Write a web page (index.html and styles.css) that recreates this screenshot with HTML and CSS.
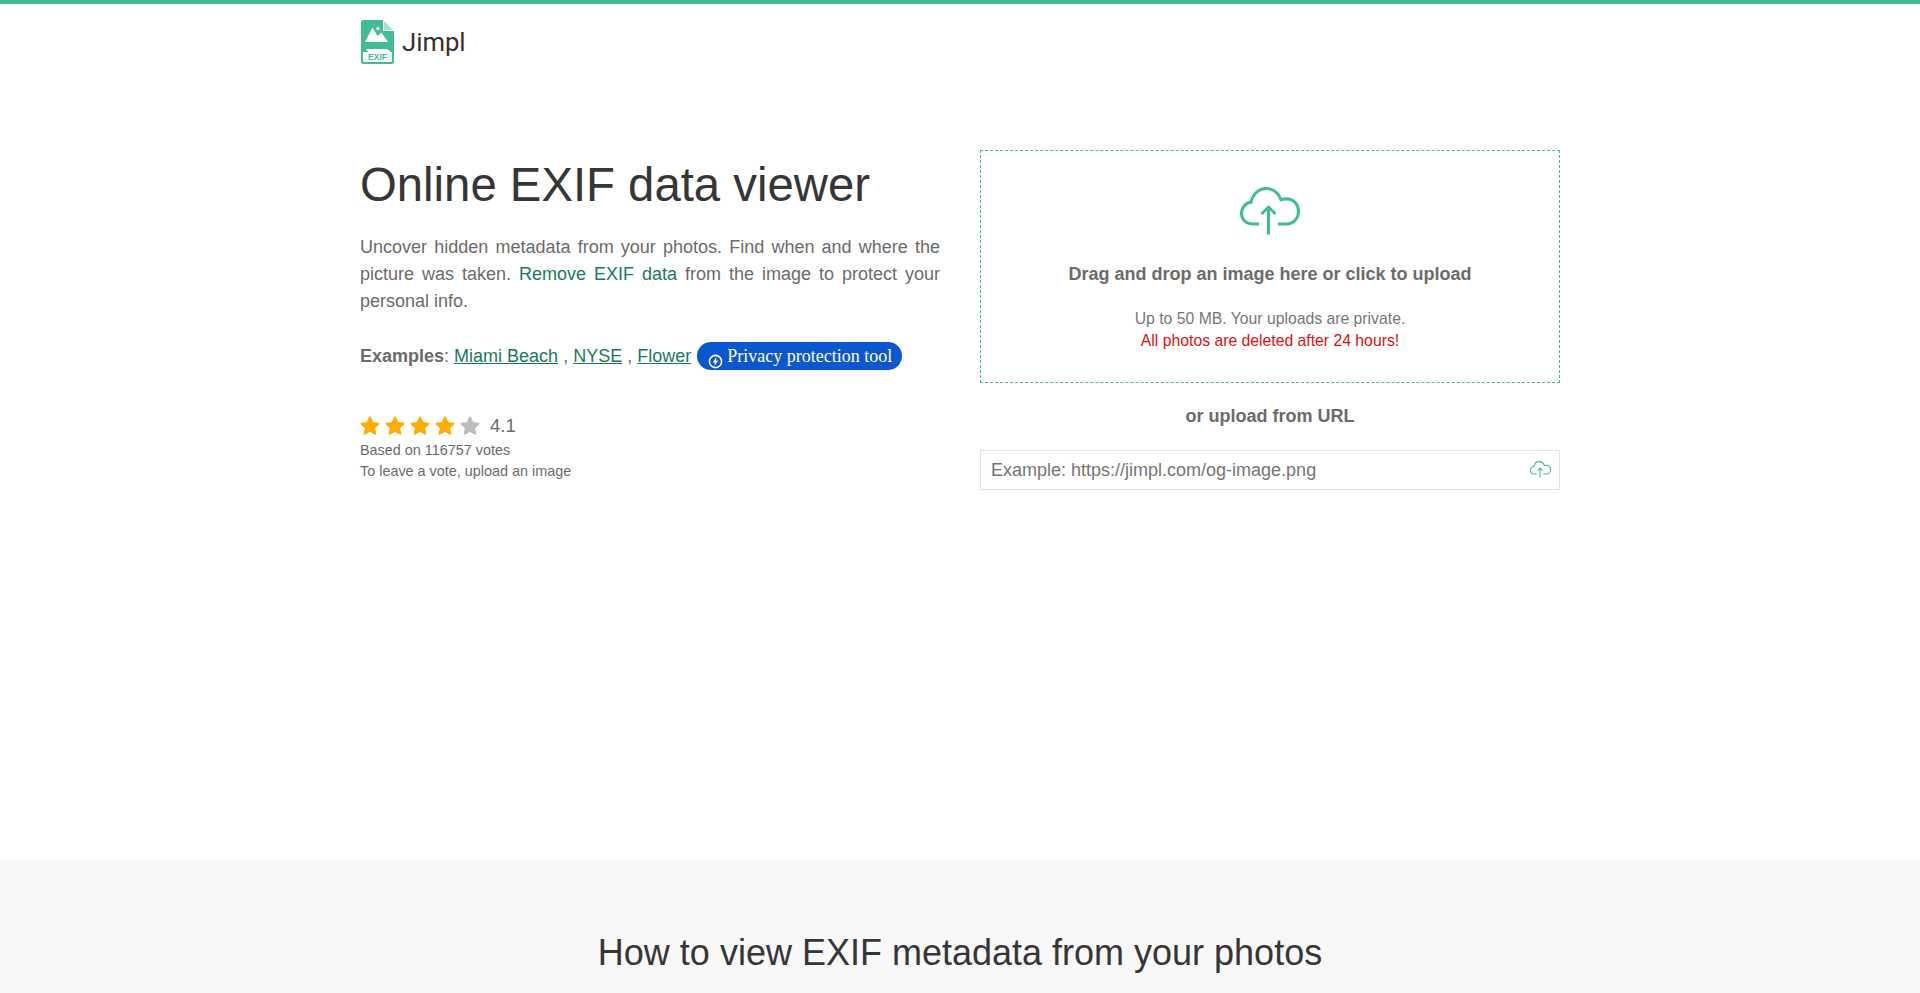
FILE: index.html
```html
<!DOCTYPE html>
<html lang="en">
<head>
<meta charset="utf-8">
<title>Jimpl - Online EXIF data viewer</title>
<link rel="stylesheet" href="styles.css">
</head>
<body>
<header class="topbar">
  <a class="brand" href="#">
    <svg class="brand-icon" viewBox="0 0 33 44" width="33" height="44">
      <path fill="#41bd94" d="M2.500 0H22L33 11V41.500a2.500 2.500 0 0 1-2.500 2.500H2.500A2.500 2.500 0 0 1 0 41.500V2.500A2.500 2.500 0 0 1 2.500 0z"/>
      <path fill="#a9e2cd" stroke="#fff" stroke-width="1" d="M22.500 0V10.500H33z"/>
      <path fill="#fff" d="M2 32H7.500L5 29H26L30 32H31V41a1 1 0 0 1-1 1H3a1 1 0 0 1-1-1z"/>
      <path fill="#fff" d="M4 22L11.500 7.500 16.500 16 20.500 12.500 27 22z"/>
      <circle fill="#fff" cx="17" cy="8.500" r="1.700"/>
      <text class="brand-exif" x="16.500" y="40" text-anchor="middle">EXIF</text>
    </svg>
    <span class="brand-name">Jimpl</span>
  </a>
</header>
<main class="hero">
  <section class="intro">
    <h1 class="title">Online EXIF data viewer</h1>
    <p class="lead">Uncover hidden metadata from your photos. Find when and where the picture was taken. <a class="plain-link" href="#">Remove EXIF data</a> from the image to protect your personal info.</p>
    <p class="examples"><strong>Examples</strong>: <a class="ex-link" href="#">Miami Beach</a> , <a class="ex-link" href="#">NYSE</a> , <a class="ex-link" href="#">Flower</a> <a class="badge" href="#"><svg class="badge-icon" viewBox="0 0 16 16" width="16" height="16"><circle cx="8" cy="8" r="6.500" fill="none" stroke="#fff" stroke-width="1.700"/><path fill="#fff" d="M9 3.200L5 9h2.300L6.800 12.800 11 7H8.600z"/></svg>Privacy protection tool</a></p>
    <div class="rating">
      <div class="stars">
        <svg class="star" viewBox="0 0 20 20" width="20" height="20"><path class="star-on" d="M10 1.500l2.500 5.500 6 .7-4.400 4.100 1.200 5.900L10 14.800l-5.300 2.900 1.200-5.900-4.400-4.100 6-.7z"/></svg>
        <svg class="star" viewBox="0 0 20 20" width="20" height="20"><path class="star-on" d="M10 1.500l2.500 5.500 6 .7-4.400 4.100 1.200 5.900L10 14.800l-5.300 2.900 1.200-5.900-4.400-4.100 6-.7z"/></svg>
        <svg class="star" viewBox="0 0 20 20" width="20" height="20"><path class="star-on" d="M10 1.500l2.500 5.500 6 .7-4.400 4.100 1.200 5.900L10 14.800l-5.300 2.900 1.200-5.900-4.400-4.100 6-.7z"/></svg>
        <svg class="star" viewBox="0 0 20 20" width="20" height="20"><path class="star-on" d="M10 1.500l2.500 5.500 6 .7-4.400 4.100 1.200 5.900L10 14.800l-5.300 2.900 1.200-5.900-4.400-4.100 6-.7z"/></svg>
        <svg class="star" viewBox="0 0 20 20" width="20" height="20"><path class="star-off" d="M10 1.500l2.500 5.500 6 .7-4.400 4.100 1.200 5.900L10 14.800l-5.300 2.900 1.200-5.900-4.400-4.100 6-.7z"/></svg>
        <span class="score">4.1</span>
      </div>
      <div class="votes">Based on 116757 votes</div>
      <div class="votes">To leave a vote, upload an image</div>
    </div>
  </section>
  <section class="upload">
    <div class="dropzone">
      <svg class="cloud" viewBox="0 0 60 48" width="60" height="48" fill="none" stroke="#41bd94" stroke-width="3">
        <path d="M19 37H12.500C6 37 1.500 32.500 1.500 26.500C1.500 20.500 6 15.500 11 15.300C12.500 7.500 18.500 1.500 26 1.500C33.500 1.500 39 6.500 41 12.800C43 12 45 11.800 47 11.800C53.500 12 58.500 17.500 58.500 24.500C58.500 31.500 53 37 46.500 37H38"/>
        <path d="M28.500 47.500V20M21.500 27L28.500 20L35.500 27"/>
      </svg>
      <div class="drop-title">Drag and drop an image here or click to upload</div>
      <div class="drop-note">Up to 50 MB. Your uploads are private.</div>
      <div class="drop-warn">All photos are deleted after 24 hours!</div>
    </div>
    <div class="or-url">or upload from URL</div>
    <div class="url-field">
      <input class="url-input" type="text" placeholder="Example: https://jimpl.com/og-image.png">
      <svg class="url-icon" viewBox="0 0 60 48" width="21" height="17" fill="none" stroke="#41bd94" stroke-width="3">
        <path d="M19 37H12.500C6 37 1.500 32.500 1.500 26.500C1.500 20.500 6 15.500 11 15.300C12.500 7.500 18.500 1.500 26 1.500C33.500 1.500 39 6.500 41 12.800C43 12 45 11.800 47 11.800C53.500 12 58.500 17.500 58.500 24.500C58.500 31.500 53 37 46.500 37H38"/>
        <path d="M28.500 47.500V20M21.500 27L28.500 20L35.500 27"/>
      </svg>
    </div>
  </section>
</main>
<section class="howto">
  <h2 class="howto-title">How to view EXIF metadata from your photos</h2>
</section>
</body>
</html>
```
FILE: styles.css
```css
* { box-sizing: border-box; }
html, body { margin: 0; padding: 0; height: 993px; overflow: hidden; }
body {
  font-family: "Liberation Sans", Arial, sans-serif;
  font-size: 18px;
  color: #6b6b6b;
  background: #fff;
  border-top: 4px solid #41bd94;
}
.topbar { width: 1200px; height: 146px; margin: 0 auto; padding-top: 16px; }
.brand { display: inline-flex; align-items: center; gap: 8px; color: #333; text-decoration: none; margin-left: 1px; }
.brand-icon { display: block; }
.brand-exif { font: bold 8.500px "Liberation Sans", Arial, sans-serif; fill: #41bd94; }
.brand-name { font-family: Roboto, sans-serif; font-size: 25.700px; color: #333; }
.hero { width: 1200px; height: 710px; margin: 0 auto; display: grid; grid-template-columns: 580px 580px; column-gap: 40px; align-items: start; }
.title { margin: 6px 0 0; font-size: 47.300px; font-weight: 400; line-height: 58px; color: #363636; }
.lead { margin: 20px 0 0; line-height: 27px; text-align: justify; }
.plain-link { color: #1a7a5c; text-decoration: none; }
.examples { margin: 27px 0 0; line-height: 27px; white-space: nowrap; }
.examples strong { font-weight: 700; }
.ex-link { color: #1a7a5c; text-decoration: underline; }
.badge { display: inline-block; margin-left: 1px; padding: 0 10px 0 11px; height: 28px; line-height: 29px; border-radius: 14px; background: #0b57d0; color: #fff; font-family: "Liberation Serif", serif; font-size: 18px; text-decoration: none; vertical-align: 0; }
.badge-icon { display: inline-block; width: 15px; height: 15px; vertical-align: -7px; margin-right: 4px; }
.rating { margin-top: 45px; }
.stars { display: flex; align-items: center; gap: 5px; height: 22px; margin-bottom: 3px; }
.star { display: block; }
.star-on, .star-off { stroke-width: 2; stroke-linejoin: round; }
.star-on { fill: #ffae00; stroke: #ffae00; }
.star-off { fill: #bdbdbd; stroke: #bdbdbd; }
.score { margin-left: 5px; font-size: 18.500px; }
.votes { font-size: 14.400px; line-height: 21px; }
.dropzone { height: 233px; border: 1px dashed #41bd94; display: flex; flex-direction: column; align-items: center; padding-top: 36px; text-align: center; }
.cloud { display: block; }
.drop-title { margin-top: 26px; font-weight: 700; line-height: 27px; }
.drop-note { margin-top: 20px; font-size: 15.750px; line-height: 22px; color: #777; }
.drop-warn { font-size: 15.750px; line-height: 22px; color: #dd1111; }
.or-url { margin-top: 20px; height: 27px; line-height: 27px; font-weight: 700; text-align: center; }
.url-field { position: relative; margin-top: 20px; height: 40px; }
.url-input { display: block; width: 100%; height: 100%; padding: 0 40px 0 10px; border: 1px solid #e2e2e2; font: 18px "Liberation Sans", Arial, sans-serif; color: #666; outline: none; }
.url-input::placeholder { color: #757575; opacity: 1; }
.url-icon { position: absolute; right: 9px; top: 11px; }
.howto { height: 133px; background: #f8f8f8; padding-top: 72px; text-align: center; }
.howto-title { margin: 0; font-size: 36px; font-weight: 400; line-height: 42px; color: #363636; }
```
